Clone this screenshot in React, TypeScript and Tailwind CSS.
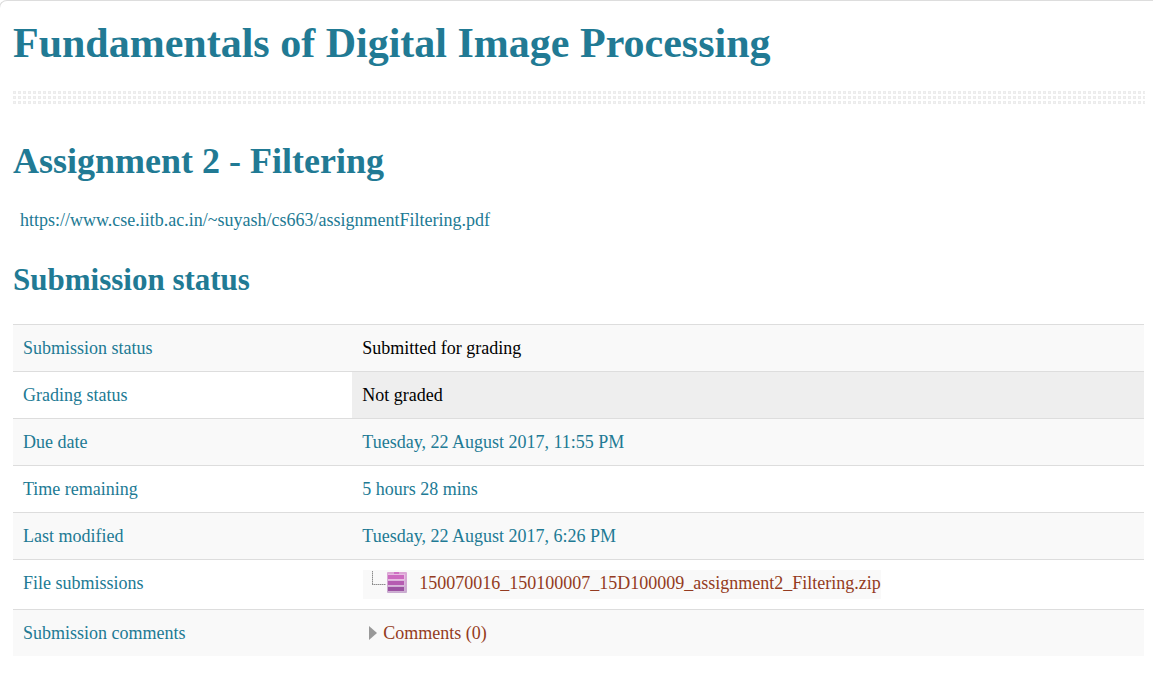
import type { ReactNode } from "react";

function DottedRule() {
  return (
    <svg className="block h-[14px] w-full" aria-hidden="true">
      <defs>
        <pattern id="dots" width="5" height="5" patternUnits="userSpaceOnUse">
          <rect width="3" height="3" fill="#ececec" />
          <rect x="1" y="1" width="1" height="1" fill="#f2f2f2" />
        </pattern>
      </defs>
      <rect width="100%" height="14" fill="url(#dots)" />
    </svg>
  );
}

function TreeBranch() {
  return (
    <svg className="h-[23px] w-4 shrink-0" viewBox="0 0 16 23" aria-hidden="true">
      <path d="M1.5 1V15M1 14.5H15" fill="none" stroke="#c4c4c4" />
      <path d="M1.5 1V15M1 14.5H15" fill="none" stroke="#8c8c8c" strokeDasharray="1 1" />
    </svg>
  );
}

function ArchiveIcon() {
  return (
    <svg className="h-[23px] w-5 shrink-0" viewBox="0 0 20 23" aria-hidden="true">
      <defs>
        <linearGradient id="frame" x1="0" y1="0" x2="0" y2="1">
          <stop offset="0" stopColor="#dca6d5" />
          <stop offset="1" stopColor="#c8abcf" />
        </linearGradient>
      </defs>
      <rect y="2" width="20" height="21" rx="1" fill="url(#frame)" />
      <rect x="7" y="2" width="5" height="2" fill="#d070c4" />
      <rect x="1" y="4" width="17" height="6" fill="#e8bce2" />
      <rect x="1" y="10" width="17" height="6" fill="#dab6dc" />
      <rect x="1" y="16" width="17" height="6" fill="#ceb0d3" />
      <rect x="1" y="5" width="16" height="4" fill="#cc6abf" />
      <rect x="1" y="11" width="16" height="4" fill="#b55cb1" />
      <rect x="1" y="17" width="16" height="4" fill="#9c53a2" />
    </svg>
  );
}

type Row = { label: string; value: ReactNode; cell?: string };

const rows: Row[] = [
  { label: "Submission status", value: "Submitted for grading", cell: "text-black" },
  { label: "Grading status", value: "Not graded", cell: "bg-[#eeeeee] text-black" },
  { label: "Due date", value: "Tuesday, 22 August 2017, 11:55 PM" },
  { label: "Time remaining", value: "5 hours 28 mins" },
  { label: "Last modified", value: "Tuesday, 22 August 2017, 6:26 PM" },
  {
    label: "File submissions",
    value: (
      <div className="ml-px flex h-[29px] w-fit items-start bg-[#f9f9f9] pl-2">
        <TreeBranch />
        <ArchiveIcon />
        <a href="#file" className="ml-3 text-[#943b21]">
          150070016_150100007_15D100009_assignment2_Filtering.zip
        </a>
      </div>
    ),
  },
  {
    label: "Submission comments",
    value: (
      <button type="button" className="flex items-center gap-[6px] pl-[7px] text-[#943b21]">
        <svg className="h-[14px] w-2" viewBox="0 0 8 14" aria-hidden="true">
          <path d="M0 0L8 7L0 14Z" fill="#999999" />
        </svg>
        Comments (0)
      </button>
    ),
  },
];

export default function App() {
  return (
    <main className="-ml-px min-h-screen rounded-tl-lg border-t border-l border-[#dddddd] bg-white pr-2 pb-4 pl-[13px] font-['Liberation_Serif',serif] text-[18px] leading-[26px] text-[#217a94]">
      <h1 className="pt-[18px] text-[42px] leading-[48px] font-bold">Fundamentals of Digital Image Processing</h1>
      <div className="pt-6">
        <DottedRule />
      </div>
      <h2 className="mt-9 text-[36px] leading-[40px] font-bold">Assignment 2 - Filtering</h2>
      <p className="mt-[26px] pl-[7px]">
        <a href="https://www.cse.iitb.ac.in/~suyash/cs663/assignmentFiltering.pdf">
          https://www.cse.iitb.ac.in/~suyash/cs663/assignmentFiltering.pdf
        </a>
      </p>
      <h3 className="mt-[27px] text-[31px] leading-[40px] font-bold">Submission status</h3>
      <div className="mt-6 pr-px">
        <table className="w-full table-fixed border-separate border-spacing-0">
          <tbody>
            {rows.map((row) => (
              <tr key={row.label} className="odd:bg-[#f9f9f9]">
                <th
                  scope="row"
                  className="w-[30%] border-t border-[#dddddd] px-[10px] py-[10px] text-left align-top font-normal"
                >
                  {row.label}
                </th>
                <td className={`border-t border-[#dddddd] px-[10px] py-[10px] align-top ${row.cell ?? ""}`}>
                  {row.value}
                </td>
              </tr>
            ))}
          </tbody>
        </table>
      </div>
    </main>
  );
}
